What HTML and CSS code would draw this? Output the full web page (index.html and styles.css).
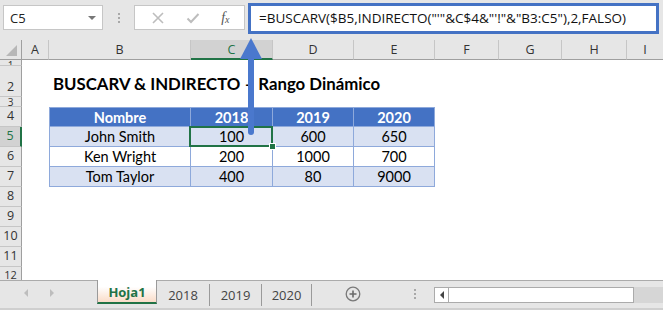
FILE: index.html
```html
<!DOCTYPE html>
<html lang="es">
<head>
    <meta charset="UTF-8" />
    <title>BUSCARV &amp; INDIRECTO</title>
    <link rel="stylesheet" href="styles.css">
</head>
<body>
<div class="app">
    <div class="toolbar">
        <div class="namebox">
            <span>C5</span>
            <span class="caret"></span>
        </div>
        <div class="grip"><i></i><i></i><i></i></div>
        <div class="fxbox">
            <svg class="ic" width="14" height="14" viewBox="0 0 14 14"><path d="M2 2L12 12M12 2L2 12" stroke="#bdbdbd" stroke-width="1.6" fill="none"/></svg>
            <svg class="ic" width="14" height="14" viewBox="0 0 14 14"><path d="M1.5 7.5L5 11L12.5 3" stroke="#bdbdbd" stroke-width="2" fill="none"/></svg>
            <span class="fx">f<sub>x</sub></span>
        </div>
        <div class="formula">=BUSCARV($B5,INDIRECTO("'"&amp;C$4&amp;"'!"&amp;"B3:C5"),2,FALSO)</div>
    </div>

    <div class="sheet">
        <!-- column headers -->
        <div class="corner"><span class="tri"></span></div>
        <div class="colhead">A</div>
        <div class="colhead">B</div>
        <div class="colhead active">C</div>
        <div class="colhead">D</div>
        <div class="colhead">E</div>
        <div class="colhead">F</div>
        <div class="colhead">G</div>
        <div class="colhead">H</div>
        <div class="colhead last">I</div>

        <!-- row headers -->
        <div class="rowhead r1">1</div>
        <div class="rowhead r2">2</div>
        <div class="rowhead r3">3</div>
        <div class="rowhead r4">4</div>
        <div class="rowhead r5 active">5</div>
        <div class="rowhead r6">6</div>
        <div class="rowhead r7">7</div>
        <div class="rowhead r8">8</div>
        <div class="rowhead r9">9</div>
        <div class="rowhead r10">10</div>
        <div class="rowhead r11">11</div>
        <div class="rowhead r12">12</div>

        <div class="title">BUSCARV &amp; INDIRECTO – Rango Dinámico</div>

        <div class="data">
            <div class="th">Nombre</div>
            <div class="th">2018</div>
            <div class="th">2019</div>
            <div class="th">2020</div>

            <div class="td band">John Smith</div>
            <div class="td band selected">100</div>
            <div class="td band">600</div>
            <div class="td band">650</div>

            <div class="td">Ken Wright</div>
            <div class="td">200</div>
            <div class="td">1000</div>
            <div class="td">700</div>

            <div class="td band">Tom Taylor</div>
            <div class="td band">400</div>
            <div class="td band">80</div>
            <div class="td band">9000</div>
        </div>
    </div>

    <div class="tabbar">
        <div class="tabnav">
            <span class="tl"></span>
            <span class="tr"></span>
        </div>
        <div class="tab current">Hoja1</div>
        <div class="tab">2018</div>
        <div class="tab">2019</div>
        <div class="tab">2020</div>
        <div class="addsheet">
            <svg width="16" height="16" viewBox="0 0 16 16"><circle cx="8" cy="8" r="6.8" fill="none" stroke="#7a7a7a" stroke-width="1.3"/><path d="M8 4.5V11.5M4.5 8H11.5" stroke="#6a6a6a" stroke-width="1.6"/></svg>
        </div>
        <div class="grip small"><i></i><i></i><i></i></div>
        <div class="hscroll">
            <div class="sbtn"><span class="sl"></span></div>
            <div class="track"></div>
            <div class="rest"></div>
        </div>
    </div>

    <svg class="arrow" width="24" height="100" viewBox="0 0 24 100">
        <path d="M11 20V96" stroke="#4a78cd" stroke-width="6" stroke-linecap="round" fill="none"/>
        <polygon points="0,23 11,2 22,23" fill="#4a78cd"/>
    </svg>
</div>
</body>
</html>
```

FILE: styles.css
```css
body {
    margin: 0;
    background: #fff;
    font-family: 'Open Sans', 'Noto Sans', sans-serif;
    color: #222;
}

.app {
    position: relative;
    width: 663px;
    height: 310px;
    overflow: hidden;
}

/* formula bar */

.toolbar {
    height: 40px;
    background: #e6e6e6;
    display: flex;
    align-items: flex-start;
    box-sizing: border-box;
    padding: 3px 0 0 3px;
}

.namebox {
    margin-top: 2px;
    width: 100px;
    height: 25px;
    box-sizing: border-box;
    background: #fff;
    border: 1px solid #c6c6c6;
    display: flex;
    align-items: center;
    justify-content: space-between;
    padding: 0 6px 0 6px;
    font-size: 13px;
    color: #222;
}

.caret {
    width: 0;
    height: 0;
    border-left: 4px solid transparent;
    border-right: 4px solid transparent;
    border-top: 4px solid #777;
}

.grip {
    width: 31px;
    display: flex;
    flex-direction: column;
    align-items: center;
    gap: 2px;
    padding-top: 10px;
}

.grip i {
    width: 2px;
    height: 2px;
    background: #a8a8a8;
}

.fxbox {
    margin-top: 2px;
    width: 111px;
    height: 25px;
    box-sizing: border-box;
    background: #fff;
    border: 1px solid #c6c6c6;
    display: flex;
    align-items: center;
    justify-content: space-around;
    padding: 0 4px 0 6px;
}

.fx {
    font-family: 'Liberation Serif', serif;
    font-style: italic;
    font-size: 14px;
    color: #555;
}

.fx sub {
    font-size: 10px;
    vertical-align: -1px;
}

.formula {
    margin-left: 3px;
    width: 411px;
    height: 31px;
    box-sizing: border-box;
    background: #fff;
    border: 3px solid #4472c4;
    padding: 0 0 0 8px;
    font-size: 13.5px;
    line-height: 25px;
    color: #111;
    white-space: nowrap;
}

/* grid */

.sheet {
    display: grid;
    grid-template-columns: 22px 27px 142px 82px 81px 81px 64px 63px 65px 1fr;
    grid-template-rows: 20px 6px 31px 10px 20px 20px 20px 20px 20px 20px 20px 20px 13px;
    height: 240px;
}

.corner,
.colhead {
    grid-row: 1;
    background: #e6e6e6;
    border-right: 1px solid #c6c6c6;
    border-bottom: 1px solid #9f9f9f;
    box-sizing: border-box;
    font-size: 12.5px;
    color: #333;
    display: flex;
    align-items: center;
    justify-content: center;
}

.corner {
    position: relative;
    border-right-color: #9f9f9f;
}

.tri {
    position: absolute;
    right: 4px;
    bottom: 3px;
    width: 0;
    height: 0;
    border-left: 11px solid transparent;
    border-bottom: 11px solid #b7b7b7;
}

.colhead.active {
    background: #d2d2d2;
    color: #217346;
    border-bottom: 2px solid #217346;
}

.colhead.last {
    border-right: none;
}

.rowhead {
    grid-column: 1;
    background: #e6e6e6;
    border-right: 1px solid #9f9f9f;
    border-bottom: 1px solid #c6c6c6;
    box-sizing: border-box;
    font-size: 12.5px;
    color: #333;
    display: flex;
    align-items: center;
    justify-content: center;
    overflow: hidden;
    line-height: 1;
}

.r1 { grid-row: 2; align-items: flex-start; font-size: 10px; }
.r2 { grid-row: 3; align-items: flex-end; padding-bottom: 3px; }
.r3 { grid-row: 4; align-items: flex-start; font-size: 10px; }
.r4 { grid-row: 5; }
.r5 { grid-row: 6; }
.r6 { grid-row: 7; }
.r7 { grid-row: 8; }
.r8 { grid-row: 9; }
.r9 { grid-row: 10; }
.r10 { grid-row: 11; }
.r11 { grid-row: 12; }
.r12 { grid-row: 13; align-items: flex-start; padding-top: 2px; font-size: 11px; border-bottom: none; }

.rowhead.active {
    background: #d2d2d2;
    color: #217346;
    border-right: 2px solid #217346;
}

.title {
    grid-row: 3;
    grid-column: 3 / span 5;
    align-self: end;
    padding: 0 0 3px 4px;
    font-family: Lato, 'Open Sans', sans-serif;
    font-weight: 700;
    font-size: 16.8px;
    color: #000;
    white-space: nowrap;
}

/* data table */

.data {
    grid-row: 5 / 9;
    grid-column: 3 / 7;
    display: grid;
    grid-template-columns: 141px 82px 81px 81px;
    grid-template-rows: 19px 20px 20px 20px;
    border-left: 1px solid #8ea9db;
    border-top: 1px solid #8ea9db;
    font-family: Lato, 'Open Sans', sans-serif;
    font-size: 14.5px;
}

.th,
.td {
    border-right: 1px solid #8ea9db;
    border-bottom: 1px solid #8ea9db;
    display: flex;
    align-items: center;
    justify-content: center;
    color: #000;
    position: relative;
}

.th {
    background: #4472c4;
    color: #fff;
    font-weight: 700;
}

.td.band {
    background: #d9e1f2;
}

.td.selected::after {
    content: '';
    position: absolute;
    top: -1px;
    left: -2px;
    right: -1px;
    bottom: -1px;
    border: 2px solid #217346;
}

.td.selected::before {
    content: '';
    position: absolute;
    right: -4px;
    bottom: -4px;
    width: 5px;
    height: 5px;
    background: #217346;
    border: 1px solid #fff;
    z-index: 2;
}

/* sheet tabs */

.tabbar {
    height: 30px;
    box-sizing: border-box;
    background: #e6e6e6;
    border-top: 1px solid #ababab;
    display: flex;
    align-items: flex-start;
    border-bottom: 2px solid #cfcfcf;
}

.tabnav {
    width: 97px;
    height: 23px;
    display: flex;
    align-items: center;
    gap: 22px;
    padding-left: 24px;
    box-sizing: border-box;
}

.tl,
.tr,
.sl {
    width: 0;
    height: 0;
    border-top: 4px solid transparent;
    border-bottom: 4px solid transparent;
}

.tl { border-right: 4px solid #bdbdbd; }
.tr { border-left: 4px solid #bdbdbd; }

.tab {
    height: 22px;
    margin-top: 3px;
    border-right: 1px solid #9a9a9a;
    box-sizing: border-box;
    font-size: 13px;
    color: #444;
    display: flex;
    align-items: center;
    justify-content: center;
    width: 52px;
}

.tab:nth-child(3) { width: 53px; }
.tab:nth-child(5) { width: 50px; }

.tab.current {
    width: 60px;
    height: 24px;
    margin-top: -1px;
    padding-top: 2px;
    border-left: 1px solid #9a9a9a;
    border-right: 1px solid #9a9a9a;
    border-bottom: 2px solid #217346;
    background: linear-gradient(#ffffff 30%, #fadcc8);
    color: #217346;
    font-weight: 700;
}

.addsheet {
    width: 84px;
    height: 26px;
    display: flex;
    align-items: center;
    justify-content: center;
    padding-right: 2px;
    box-sizing: border-box;
}

.grip.small {
    width: 38px;
    padding-top: 8px;
}

.hscroll {
    flex: 1;
    margin-top: 6px;
    height: 16px;
    display: flex;
}

.sbtn {
    width: 15px;
    box-sizing: border-box;
    border: 1px solid #ababab;
    background: #fff;
    display: flex;
    align-items: center;
    justify-content: center;
}

.sl { border-right: 4px solid #444; }

.track {
    width: 185px;
    box-sizing: border-box;
    background: #fff;
    border: 1px solid #ababab;
    border-left: none;
}

.rest {
    flex: 1;
    background: #d6d6d6;
}

/* arrow pointing at the formula */

.arrow {
    position: absolute;
    left: 240px;
    top: 36px;
}
```
